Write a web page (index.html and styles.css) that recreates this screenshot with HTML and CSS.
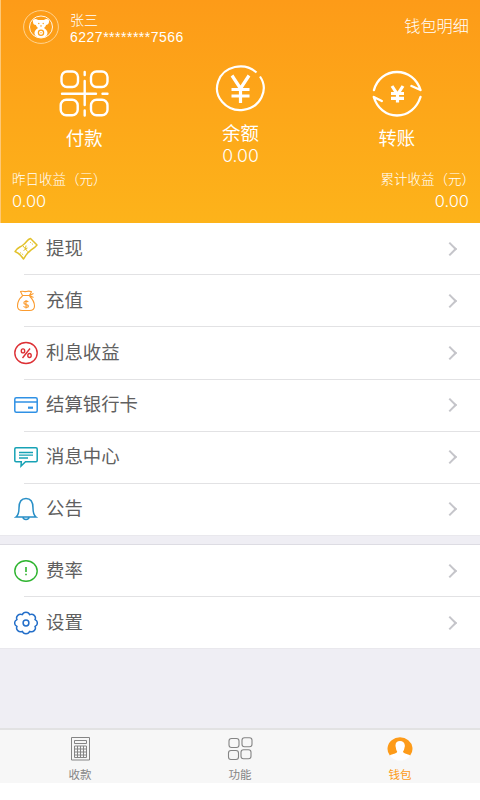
FILE: index.html
```html
<!doctype html>
<html lang="zh-CN">
<head>
<meta charset="UTF-8">
<title>钱包</title>
<meta name="viewport" content="width=device-width, initial-scale=1.0">
<link rel="stylesheet" href="styles.css">
</head>
<body>
<header class="wallet">
  <div class="user">
    <svg class="avatar" width="36" height="34" viewBox="0 0 36 34" preserveAspectRatio="none">
      <ellipse cx="18" cy="17" rx="17.4" ry="16.4" fill="none" stroke="#ffe0ad" stroke-width=".8"/>
      <ellipse cx="18" cy="17" rx="11.5" ry="11" fill="none" stroke="#fff" stroke-width=".9"/>
      <path d="M10 12c-1-3 3-4 5-2h6c2-2 6-1 5 2 0 2-2 3-3 3 0 1-1 2-2 3 5 3 4 7 1 9-2 1-6 1-8 0-3-2-4-6 1-9-1-1-2-2-2-3-2 0-3-1-3-3z" fill="#fff"/>
      <g fill="#fda018"><circle cx="15.8" cy="13.5" r=".7"/><circle cx="20.2" cy="13.5" r=".7"/><path d="M16.8 15.5h2.4L18 17z"/></g>
      <circle cx="18" cy="22.7" r="2.6" fill="#fff" stroke="#fda018" stroke-width="1.3"/>
      <circle cx="18" cy="22.7" r=".6" fill="#fda018"/>
    </svg>
    <div class="who">
      <div class="name">张三</div>
      <div class="card-no">6227********7566</div>
    </div>
    <a class="detail">钱包明细</a>
  </div>
  <div class="actions">
    <div class="action">
      <svg width="50" height="48" viewBox="0 0 50 48" fill="none" stroke="#fff" stroke-width="2.4" stroke-linecap="round">
        <rect x="2.5" y="1.5" width="16.5" height="15.5" rx="5.5"/>
        <rect x="32" y="1.5" width="16.5" height="15.5" rx="5.5"/>
        <rect x="1.7" y="29.8" width="17" height="15.5" rx="5.5"/>
        <rect x="32" y="29.8" width="16.5" height="15.5" rx="5.5"/>
        <path d="M25.7 2v3M25.7 11v24M25.7 40.5v5M3 23.8h34M43.500 23.8h5"/>
      </svg>
      <div class="label">付款</div>
    </div>
    <div class="action balance">
      <svg width="50" height="48" viewBox="0 0 50 48" fill="none" stroke="#fff" stroke-width="2.2">
        <path d="M41.5 7.500A23.3 21.8 0 1 0 45 11.5"/>
        <path d="M17 10.5l8.500 13 8.500-13M25.500 23.5V38M16.500 24.500h18M16.500 31h18" stroke-width="3.2"/>
      </svg>
      <div class="label">余额</div>
      <div class="amount">0.00</div>
    </div>
    <div class="action">
      <svg width="50" height="48" viewBox="0 0 50 48" fill="none" stroke="#fff" stroke-width="2.4" stroke-linecap="round" stroke-linejoin="round">
        <path d="M2 20C5 9 14 2 25 2s20 7 23.500 18l-9-4M48.500 27C45 38 36 45.500 25 45.500S5 38 1.800 27l8 4"/>
        <path d="M20 16l5.500 8.500L31 16M25.500 24.500v8M19 23.500h13M19 28.300h13" stroke-width="3.2" stroke-linecap="butt"/>
      </svg>
      <div class="label">转账</div>
    </div>
  </div>
  <div class="income">
    <div>
      <div class="caption">昨日收益（元）</div>
      <div class="money">0.00</div>
    </div>
    <div class="total">
      <div class="caption">累计收益（元）</div>
      <div class="money">0.00</div>
    </div>
  </div>
</header>

<ul class="menu">
  <li>
    <svg class="icon" viewBox="0 0 24 24" stroke="#e2c12a" stroke-width="1.5" stroke-linejoin="round">
      <path d="M1 14.500C3 10.500 6 10.500 9 8c4-3 4-5.500 7.500-6.500L23 8c-2.500 3-4 3.500-7 6-4 2.500-4 5-6.500 8-2-3-4.500-6-8.500-7.500z"/>
      <path d="M9 9l2.500 3 .5-3.500M11.500 12l2 2.500M9.500 13.500l4-2.500" stroke-width="1"/>
      <path d="M16 5l3 2.500M6 15.500l3.500 2.500" stroke-width=".9" stroke-dasharray="1.5 1"/>
    </svg>
    <span>提现</span><i class="arrow"></i>
  </li>
  <li>
    <svg class="icon" viewBox="0 0 24 24" stroke="#fb9c30" stroke-width="1.1" stroke-linejoin="round">
      <path d="M8.500 6.500L6.500 2.500c3-.8 4 .6 6 0s3-.6 5 .3L15.500 6.500zM8.500 7C6 9 3.500 13 3.500 17c0 3.500 2 4.500 5 4.500h7c3 0 5-1 5-4.500 0-4-3-8-5-10M15.500 6.500l4-2M15.500 6.500l4 2"/>
      <path d="M14.300 13c-1-1.500-4.500-1-4.500 1s4.700 1.200 4.700 3-4 1.700-5 .2M12 11v8.500"/>
    </svg>
    <span>充值</span><i class="arrow"></i>
  </li>
  <li>
    <svg class="icon" viewBox="0 0 24 24" stroke="#dd3035" stroke-width="1.4">
      <ellipse cx="12" cy="12" rx="11.2" ry="10.5"/>
      <ellipse cx="9" cy="9.9" rx="1.7" ry="2"/><ellipse cx="15.5" cy="14.5" rx="1.7" ry="2"/><path d="M16 7.500l-7.500 9.500"/>
    </svg>
    <span>利息收益</span><i class="arrow"></i>
  </li>
  <li>
    <svg class="icon" viewBox="0 0 24 24" stroke="#2f91e5" stroke-width="1.5">
      <rect x=".8" y="4.8" width="22.4" height="14.5" rx="1.5"/>
      <path d="M1 9h22"/><path d="M14 14.700h5" stroke-width="2.2"/>
    </svg>
    <span>结算银行卡</span><i class="arrow"></i>
  </li>
  <li>
    <svg class="icon" viewBox="0 0 24 24" stroke="#17a2b5" stroke-width="1.5">
      <path d="M2 2.800h20q1.200 0 1.200 1.200v11.500q0 1.200-1.200 1.200H11.500L7 21l.3-4.300H2Q.8 16.700.8 15.500V4Q.8 2.800 2 2.800z"/>
      <path d="M5 7.500h14M5 10.200h14M5 13h9" stroke-width="1.3"/>
    </svg>
    <span>消息中心</span><i class="arrow"></i>
  </li>
  <li>
    <svg class="icon" viewBox="0 0 24 24" stroke="#288fc7" stroke-width="1.5">
      <path d="M2 20c2-1.500 3-4 3-9C5 5 7.500 1.500 12 1.500S19 5 19 11c0 5 1 7.500 3 9zM9 20c0 3.200 6 3.200 6 0"/>
    </svg>
    <span>公告</span><i class="arrow"></i>
  </li>
</ul>

<ul class="menu second">
  <li>
    <svg class="icon" viewBox="0 0 24 24" stroke="#2eb42f" stroke-width="1.4">
      <ellipse cx="12" cy="12" rx="11.2" ry="10.3"/><path d="M12 8v5M12 14.800v1.500" stroke-width="1.6"/>
    </svg>
    <span>费率</span><i class="arrow"></i>
  </li>
  <li>
    <svg class="icon" viewBox="0 0 24 24" stroke="#246fc9" stroke-width="1.5" stroke-linejoin="round">
      <path d="M8.300 3.700A3.900 3.700 0 0 1 15.700 3.700A3.900 3.700 0 0 1 21 8.600A3.900 3.700 0 0 1 21 15.400A3.900 3.700 0 0 1 15.700 20.300A3.900 3.700 0 0 1 8.300 20.300A3.900 3.700 0 0 1 3 15.400A3.900 3.700 0 0 1 3 8.600A3.900 3.700 0 0 1 8.300 3.700z"/>
      <circle cx="12" cy="12" r="2.9"/>
    </svg>
    <span>设置</span><i class="arrow"></i>
  </li>
</ul>

<nav class="tabs">
  <a class="tab">
    <svg width="26" height="24" viewBox="0 0 26 24" fill="none" stroke="#858585">
      <path d="M4.500.5h18v22.500h-18zM7.500 3.500h12v3h-12zM7.500 9h12v11.500h-12zM7.500 12h12M7.500 15h12M7.500 18h12M10.500 9v11.500M13.500 9v11.500M16.500 9v11.500"/>
    </svg>
    <span>收款</span>
  </a>
  <a class="tab">
    <svg width="26" height="24" viewBox="0 0 26 24" fill="none" stroke="#858585" stroke-width="1.1">
      <rect x="2" y="1.5" width="10" height="9" rx="2.5"/><rect x="15" y=".8" width="10" height="9" rx="2.5"/>
      <rect x="1.500" y="13.5" width="10" height="9" rx="2.5"/><rect x="14" y="12.8" width="10" height="9" rx="2.5"/>
    </svg>
    <span>功能</span>
  </a>
  <a class="tab active">
    <svg width="26" height="24" viewBox="0 0 26 24">
      <ellipse cx="13" cy="12" rx="12.3" ry="11.5" fill="#fff"/>
      <path d="M2.800 18.500A12.500 11.500 0 1 1 23.200 18.500C20.500 16.500 16.500 17 16 14.500 17.500 13 17.200 11 17.800 9.500 18.200 6 16 4 13 4S8 6 8.600 9.500c.5 1.500.3 3.500 1.600 5C9.800 17 5.500 16.500 2.800 18.500z" fill="#fd9b19"/>
    </svg>
    <span>钱包</span>
  </a>
</nav>
</body>
</html>
```
FILE: styles.css
```css
* {
  box-sizing: border-box;
}
body {
  margin: 0;
  height: 783px;
  display: flex;
  flex-direction: column;
  background: #efeef4;
  font-family: "Liberation Sans", "Noto Sans CJK SC", sans-serif;
}
html {
  background: #fff;
}
svg {
  display: block;
}
.wallet {
  height: 223px;
  flex: none;
  display: flex;
  flex-direction: column;
  color: #fff;
  background: linear-gradient(#fd9b18, #fdb31a);
  border-left: 1px solid #fec876;
}
.user {
  display: flex;
  height: 66px;
  padding: 10px 11px 0 22px;
}
.who {
  flex: 1;
  padding: 1px 0 0 11px;
}
.name {
  font-size: 14px;
  line-height: 19px;
  font-weight: 300;
}
.card-no {
  font-size: 14px;
  line-height: 15px;
  letter-spacing: .5px;
}
.detail {
  font-size: 16.2px;
  line-height: 33px;
  font-weight: 300;
}
.actions {
  display: flex;
  height: 103px;
  padding: 0 5px;
}
.action {
  flex: 1;
  padding-top: 4px;
  text-align: center;
}
.action svg {
  margin: 0 auto;
}
.balance {
  padding-top: 0;
  margin-top: -1px;
}
.label {
  font-size: 18.4px;
  line-height: 22px;
  margin-top: 10px;
}
.amount {
  font-family: Inter, sans-serif;
  font-weight: 300;
  font-size: 17.6px;
  line-height: 21px;
}
.income {
  display: flex;
  justify-content: space-between;
  padding: 0 11px;
}
.caption {
  font-size: 13.5px;
  line-height: 21px;
  font-weight: 300;
}
.total .caption {
  margin-right: -6px;
}
.money {
  font-family: Inter, sans-serif;
  font-weight: 300;
  font-size: 16.4px;
  line-height: 23px;
}
.total {
  text-align: right;
}
.menu {
  list-style: none;
  margin: 0;
  padding: 0;
  flex: none;
  background: #fff;
  border-bottom: 1px solid #e9e8ed;
}
.menu li {
  display: flex;
  align-items: center;
  height: 52.2px;
  margin-left: 24px;
  padding-right: 25px;
  border-bottom: 1px solid #e2e2e4;
  font-size: 18.4px;
  color: #606060;
}
.menu li:last-child {
  height: 51px;
  border-bottom: 0;
}
.menu span {
  flex: 1;
  line-height: 26px;
}
.icon {
  width: 24px;
  height: 24px;
  margin: 0 8px 0 -10px;
  fill: none;
}
.arrow {
  width: 10px;
  height: 10px;
  border: solid #c5c5ca;
  border-width: 2px 2px 0 0;
  transform: rotate(45deg);
}
.second {
  margin-top: 8px;
  border-top: 1px solid #dddce3;
}
.tabs {
  margin-top: auto;
  height: 55px;
  display: flex;
  padding-top: 7px;
  background: #f7f7f7;
  border-top: 2px solid #e2e2e3;
}
.tab {
  flex: 1;
  display: flex;
  flex-direction: column;
  align-items: center;
  font-size: 11.5px;
  line-height: 16px;
  color: #858585;
}
.tab span {
  margin-top: 6px;
}
.active {
  color: #fd9b19;
}
```
